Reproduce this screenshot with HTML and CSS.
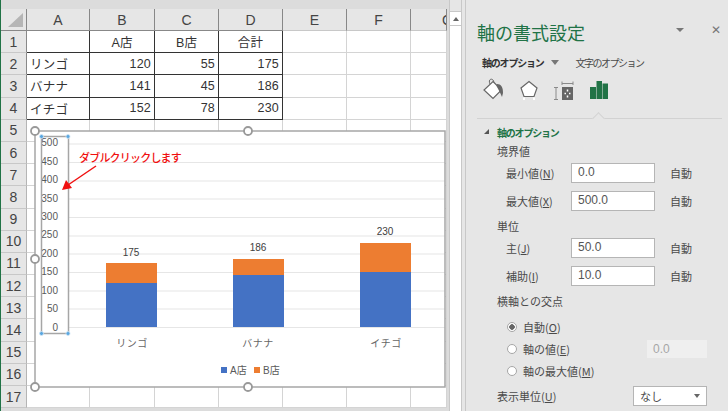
FILE: index.html
```html
<!doctype html>
<html lang="ja">
<head>
<meta charset="utf-8">
<title>軸の書式設定</title>
<link rel="stylesheet" href="styles.css">
</head>
<body>
<div class="app">
  <!-- シート -->
  <div class="sheet">
    <table class="cells">
      <colgroup>
        <col class="c-head"><col class="c-a"><col class="c-b"><col class="c-c"><col class="c-d"><col class="c-e"><col class="c-f"><col class="c-g">
      </colgroup>
      <tr class="heads">
        <th class="corner"><span class="corner-mark"></span></th><th>A</th><th>B</th><th>C</th><th>D</th><th>E</th><th>F</th><th class="clip">G</th>
      </tr>
      <tr><th>1</th><td class="box"></td><td class="box mid">A店</td><td class="box mid">B店</td><td class="box mid">合計</td><td></td><td></td><td></td></tr>
      <tr><th>2</th><td class="box">リンゴ</td><td class="box num">120</td><td class="box num">55</td><td class="box num">175</td><td></td><td></td><td></td></tr>
      <tr><th>3</th><td class="box">バナナ</td><td class="box num">141</td><td class="box num">45</td><td class="box num">186</td><td></td><td></td><td></td></tr>
      <tr><th>4</th><td class="box">イチゴ</td><td class="box num">152</td><td class="box num">78</td><td class="box num">230</td><td></td><td></td><td></td></tr>
      <tr><th>5</th><td></td><td></td><td></td><td></td><td></td><td></td><td></td></tr>
      <tr><th>6</th><td></td><td></td><td></td><td></td><td></td><td></td><td></td></tr>
      <tr><th>7</th><td></td><td></td><td></td><td></td><td></td><td></td><td></td></tr>
      <tr><th>8</th><td></td><td></td><td></td><td></td><td></td><td></td><td></td></tr>
      <tr><th>9</th><td></td><td></td><td></td><td></td><td></td><td></td><td></td></tr>
      <tr><th>10</th><td></td><td></td><td></td><td></td><td></td><td></td><td></td></tr>
      <tr><th>11</th><td></td><td></td><td></td><td></td><td></td><td></td><td></td></tr>
      <tr><th>12</th><td></td><td></td><td></td><td></td><td></td><td></td><td></td></tr>
      <tr><th>13</th><td></td><td></td><td></td><td></td><td></td><td></td><td></td></tr>
      <tr><th>14</th><td></td><td></td><td></td><td></td><td></td><td></td><td></td></tr>
      <tr><th>15</th><td></td><td></td><td></td><td></td><td></td><td></td><td></td></tr>
      <tr><th>16</th><td></td><td></td><td></td><td></td><td></td><td></td><td></td></tr>
      <tr><th>17</th><td></td><td></td><td></td><td></td><td></td><td></td><td></td></tr>
    </table>

    <!-- グラフ -->
    <svg class="chart" viewBox="28 125 420 268" width="420" height="268">
      <rect class="chart-bg" x="35" y="131" width="410" height="256"/>
      <g class="grid">
        <path d="M69 144H445M69 162.500H445M69 181H445M69 199H445M69 217.500H445M69 236H445M69 254H445M69 272.500H445M69 291H445M69 309H445M69 327.500H445"/>
      </g>
      <g class="blue">
        <rect x="106" y="283" width="51" height="44"/>
        <rect x="233" y="275" width="51" height="52"/>
        <rect x="360" y="272" width="51" height="55"/>
      </g>
      <g class="orange">
        <rect x="106" y="263" width="51" height="20"/>
        <rect x="233" y="259" width="51" height="16"/>
        <rect x="360" y="243" width="51" height="29"/>
      </g>
      <g class="val">
        <text x="131" y="256">175</text>
        <text x="258" y="251">186</text>
        <text x="385" y="235">230</text>
      </g>
      <g class="axis">
        <text x="58" y="146">500</text>
        <text x="58" y="165">450</text>
        <text x="58" y="183">400</text>
        <text x="58" y="202">350</text>
        <text x="58" y="220">300</text>
        <text x="58" y="238">250</text>
        <text x="58" y="257">200</text>
        <text x="58" y="275">150</text>
        <text x="58" y="294">100</text>
        <text x="58" y="312">50</text>
        <text x="58" y="331">0</text>
      </g>
      <g class="cat">
        <text x="132" y="347">リンゴ</text>
        <text x="258" y="347">バナナ</text>
        <text x="386" y="347">イチゴ</text>
      </g>
      <rect class="blue" x="221" y="367" width="6" height="6"/>
      <text class="legend" x="230" y="374">A店</text>
      <rect class="orange" x="254" y="367" width="6" height="6"/>
      <text class="legend" x="263" y="374">B店</text>

      <!-- グラフの枠 -->
      <rect class="frame" x="35" y="131" width="410" height="256"/>
      <g class="handle">
        <circle cx="35" cy="131" r="4"/>
        <circle cx="248" cy="131" r="4"/>
        <circle cx="35" cy="259" r="4"/>
        <circle cx="35" cy="387" r="4"/>
        <circle cx="248" cy="387" r="4"/>
      </g>
      <!-- 縦軸の選択 -->
      <rect class="axis-box" x="41.500" y="136.500" width="27" height="197"/>
      <g class="dot">
        <circle cx="41.500" cy="136.500" r="2"/>
        <circle cx="68" cy="136.500" r="2"/>
        <circle cx="41.500" cy="333.500" r="2"/>
        <circle cx="68" cy="333.500" r="2"/>
      </g>
      <text class="note" x="79" y="162">ダブルクリックします</text>
      <path class="arrow-line" d="M96 166L68 185"/>
      <path class="arrow-head" d="M62 190L66 180L72 188Z"/>
    </svg>
  </div>

  <!-- スクロールバー -->
  <div class="vscroll">
    <div class="vscroll-btn"><span class="up"></span></div>
  </div>

  <!-- 作業ウィンドウ -->
  <aside class="pane">
    <div class="pane-top">
      <h1>軸の書式設定</h1>
      <span class="pane-drop"></span>
      <span class="pane-close">✕</span>
    </div>
    <div class="tabs">
      <span class="tab-on">軸のオプション</span>
      <span class="tab-arrow"></span>
      <span class="tab-off">文字のオプション</span>
    </div>
    <div class="icons">
      <svg width="22" height="22" viewBox="0 0 22 22">
        <path d="M8 6C6 2 9 0 11 2C12 3 12 5 11 7" fill="none" stroke="#666"/>
        <path d="M11 3.500L19.500 12L11 20.500L2 12Z" fill="#fff" stroke="#666" stroke-width="1.200"/>
        <path d="M15 6C19 6 21 9 21 15L20 19L18 14.500L14.500 8Z" fill="#666"/>
      </svg>
      <svg width="20" height="22" viewBox="0 0 20 22">
        <path d="M10 3.500L18 10L15 18.500H5L2 10Z" fill="#fff" stroke="#666" stroke-width="1.200"/>
        <path d="M5 19.500V22M15 19.500V22" stroke="#fff" stroke-width="2"/>
      </svg>
      <svg width="20" height="22" viewBox="1 0 20 22">
        <path d="M9 5.500H20M9 3.500V7M20 3.500V7M1 9.500H5M1 21.500H5M3 9.500V21.500" fill="none" stroke="#8a8a8a"/>
        <rect x="9" y="9" width="11" height="13" fill="#666"/>
        <path d="M14.500 11.500V13.500M14.500 17.500V19.500M11.500 15.500H13M16 15.500H17.500" stroke="#fff" stroke-width="1.500"/>
      </svg>
      <svg width="20" height="22" viewBox="0 0 20 22">
        <path d="M1 9H7V21H1ZM7.500 3H13V21H7.500ZM13.500 5.500H19V21H13.500Z" fill="#217346"/>
      </svg>
    </div>
    <div class="rule"><span class="notch"></span></div>

    <div class="section">
      <span class="sec-mark"></span>軸のオプション
    </div>

    <div class="group first">境界値</div>
    <div class="field">
      <label>最小値(<u>N</u>)</label><span class="input">0.0</span><span class="auto">自動</span>
    </div>
    <div class="field">
      <label>最大値(<u>X</u>)</label><span class="input">500.0</span><span class="auto">自動</span>
    </div>

    <div class="group">単位</div>
    <div class="field">
      <label>主(<u>J</u>)</label><span class="input">50.0</span><span class="auto">自動</span>
    </div>
    <div class="field">
      <label>補助(<u>I</u>)</label><span class="input">10.0</span><span class="auto">自動</span>
    </div>

    <div class="group">横軸との交点</div>
    <div class="radios">
      <div class="radio"><span class="dot-r on"></span>自動(<u>O</u>)</div>
      <div class="radio"><span class="dot-r"></span>軸の値(<u>E</u>)<span class="input off">0.0</span></div>
      <div class="radio"><span class="dot-r"></span>軸の最大値(<u>M</u>)</div>
    </div>
    <div class="unit">
      <label>表示単位(<u>U</u>)</label>
      <span class="select">なし<span class="sel-arrow"></span></span>
    </div>
  </aside>
</div>
</body>
</html>
```

FILE: styles.css
```css
html, body {
    margin: 0;
    height: 100%;
    overflow: hidden;
}

body {
    background: #e6e6e6;
    color: #4a4a4a;
    font-family: "Noto Sans CJK JP", "Liberation Sans", sans-serif;
}

.app {
    display: flex;
    width: 728px;
    height: 411px;
    overflow: hidden;
}

/* シート */
.sheet {
    position: relative;
    flex: none;
    width: 449px;
    height: 411px;
    padding-top: 9px;
    box-sizing: border-box;
    border-left: 1px solid #217346;
    background: #dcdcdc;
    overflow: hidden;
}

.cells {
    border-collapse: separate;
    border-spacing: 0;
    table-layout: fixed;
    width: 446px;
    background: #fff;
}

.c-head { width: 26px; }
.c-a { width: 63px; }
.c-b { width: 65px; }
.c-c { width: 64px; }
.c-d { width: 64px; }
.c-e { width: 64px; }
.c-f { width: 64px; }
.c-g { width: 36px; }

.cells tr {
    height: 22.2px;
}

.cells .heads {
    height: 22px;
}

.cells th {
    padding: 0;
    box-sizing: border-box;
    background: #e6e6e6;
    color: #444;
    border-right: 1px solid #b5b5b5;
    border-bottom: 1px solid #c8c8c8;
    font: 14px "Liberation Sans", sans-serif;
    overflow: hidden;
}

.cells tr:nth-child(-n+5) th {
    border-right-color: #888;
}

.cells .heads th:nth-child(-n+5) {
    border-bottom-color: #888;
}

.cells td {
    padding: 0 3px;
    box-sizing: border-box;
    border-right: 1px solid #d4d4d4;
    border-bottom: 1px solid #d4d4d4;
    color: #333;
    font: 12.500px "Liberation Sans", "Noto Sans CJK JP", sans-serif;
    letter-spacing: 0.2px;
    white-space: nowrap;
}

.cells td.box {
    border-right: 1.500px solid #333;
    border-bottom: 1.500px solid #333;
}

.mid { text-align: center; }
.num { text-align: right; }

.clip {
    text-align: left;
    padding-left: 31px !important;
}

.corner {
    position: relative;
}

.corner-mark {
    position: absolute;
    left: 7px;
    top: 4px;
    width: 0;
    height: 0;
    border-left: 15px solid transparent;
    border-bottom: 14px solid #b5b5b5;
}

/* グラフ */
.chart {
    position: absolute;
    left: 27px;
    top: 125px;
}

.chart-bg { fill: #fff; }
.grid path { stroke: #e6e6e6; stroke-width: 1.200; fill: none; }
.blue { fill: #4472c4; }
.orange { fill: #ed7d31; }

.chart text {
    font-family: "Liberation Sans", "Noto Sans CJK JP", sans-serif;
}

.val text {
    font-size: 10px;
    fill: #404040;
    text-anchor: middle;
}

.axis text {
    font-size: 10px;
    fill: #595959;
    text-anchor: end;
}

.cat text {
    font-size: 10px;
    fill: #666;
    text-anchor: middle;
    letter-spacing: 0.5px;
}

.legend {
    font-size: 10px;
    fill: #595959;
}

.frame {
    fill: none;
    stroke: #a6a6a6;
    stroke-width: 1.500;
}

.handle circle {
    fill: #fff;
    stroke: #999;
    stroke-width: 1.800;
}

.axis-box {
    fill: none;
    stroke: #a6a6a6;
    stroke-width: 1.500;
}

.dot circle {
    fill: #5aa7e0;
    stroke: #cfe4f5;
    stroke-width: 0.800;
}

.chart .note {
    font-size: 11px;
    font-weight: 500;
    fill: #f01010;
    font-family: "Noto Sans CJK JP", sans-serif;
    letter-spacing: -0.8px;
}

.arrow-line {
    stroke: #f01010;
    stroke-width: 1.500;
    fill: none;
}

.arrow-head { fill: #f01010; }

/* スクロールバー */
.vscroll {
    flex: none;
    width: 13px;
    height: 411px;
    padding-top: 11px;
    box-sizing: border-box;
    border-left: 1px solid #c8c8c8;
    border-right: 1px solid #c8c8c8;
    background: linear-gradient(#e6e6e6 11px, #fff 11px);
}

.vscroll-btn {
    display: flex;
    justify-content: center;
    align-items: center;
    height: 13px;
    border-top: 1px solid #c8c8c8;
    border-bottom: 1px solid #c8c8c8;
}

.up {
    width: 0;
    height: 0;
    border: 3px solid transparent;
    border-top: 0;
    border-bottom: 4px solid #666;
}

/* 作業ウィンドウ */
.pane {
    flex: none;
    width: 260px;
    height: 411px;
    margin-left: 3px;
    padding: 0 3px 0 11px;
    box-sizing: border-box;
    border-left: 1px solid #c8c8c8;
    font-size: 11px;
    color: #4a4a4a;
}

.pane-top {
    display: flex;
    align-items: center;
    height: 48px;
    padding-top: 9px;
    box-sizing: border-box;
}

.pane-top h1 {
    flex: 1;
    margin: 6px 0 0;
    font-size: 18px;
    font-weight: 400;
    line-height: 48px;
    color: #217346;
}

.pane-drop {
    width: 0;
    height: 0;
    margin-top: 2px;
    margin-right: 27px;
    border: 4px solid transparent;
    border-bottom: 0;
    border-top: 4px solid #777;
}

.pane-close {
    margin-top: 2px;
    margin-right: 1px;
    font-family: "DejaVu Sans", sans-serif;
    font-size: 12px;
    font-weight: 700;
    color: #777;
}

.tabs {
    display: flex;
    align-items: center;
    height: 22px;
    margin-top: 3px;
    padding-left: 5px;
    font-size: 10px;
    letter-spacing: -1.200px;
}

.tab-on {
    font-weight: 700;
    color: #333;
}

.tab-off {
    letter-spacing: -1.500px;
}

.tab-arrow {
    width: 0;
    height: 0;
    margin: 0 17px 0 7px;
    border: 4px solid transparent;
    border-bottom: 0;
    border-top: 5px solid #777;
}

.icons {
    display: flex;
    gap: 15px;
    align-items: center;
    height: 30px;
    margin-top: 1px;
    padding-left: 5px;
}

.rule {
    position: relative;
    height: 0;
    margin-top: 14px;
    border-bottom: 1px solid #d2d2d2;
}

.notch {
    position: absolute;
    left: 117px;
    top: -4px;
    width: 8px;
    height: 8px;
    background: #e6e6e6;
    border-left: 1px solid #d2d2d2;
    border-top: 1px solid #d2d2d2;
    transform: rotate(45deg);
}

.section {
    position: relative;
    display: flex;
    align-items: center;
    height: 18px;
    margin-top: 4px;
    padding-left: 20px;
    font-size: 10px;
    font-weight: 700;
    letter-spacing: -1.200px;
    color: #217346;
}

.sec-mark {
    position: absolute;
    left: 7px;
    top: 6px;
    width: 0;
    height: 0;
    border-left: 5px solid transparent;
    border-bottom: 5px solid #555;
}

.group {
    height: 20px;
    margin-top: 5px;
    padding-left: 20px;
    line-height: 20px;
}

.group.first {
    margin-top: 0;
}

.field {
    display: flex;
    align-items: center;
    height: 20px;
    margin-top: 8px;
    padding-left: 29px;
}

.group + .field {
    margin-top: 2px;
}

.field label {
    width: 65px;
}

.input {
    display: block;
    box-sizing: border-box;
    width: 84px;
    height: 20px;
    padding-left: 6px;
    background: #fff;
    border: 1px solid #b5b5b5;
    font-family: "Liberation Sans", sans-serif;
    font-size: 12px;
    line-height: 16px;
    color: #555;
}

.auto {
    margin-left: 15px;
}

.radios {
    padding-top: 5px;
}

.radio {
    display: flex;
    align-items: center;
    height: 22px;
    padding-left: 30px;
}

.dot-r {
    box-sizing: border-box;
    width: 10px;
    height: 10px;
    margin-right: 6px;
    border: 1px solid #a6a6a6;
    border-radius: 50%;
    background: #fff;
}

.dot-r.on {
    background: radial-gradient(circle, #666 0 2.500px, #fff 3px);
}

.input.off {
    width: 60px;
    height: 18px;
    margin-left: auto;
    margin-right: 15px;
    border: 0;
    background: #efefef;
    color: #a6a6a6;
    line-height: 18px;
}

.unit {
    display: flex;
    align-items: center;
    height: 20px;
    margin-top: 4px;
    padding-left: 20px;
}

.unit label {
    width: 136px;
}

.select {
    display: flex;
    align-items: center;
    box-sizing: border-box;
    width: 74px;
    height: 20px;
    padding: 0 6px;
    background: #fff;
    border: 1px solid #b5b5b5;
}

.sel-arrow {
    width: 0;
    height: 0;
    margin-left: auto;
    border: 3px solid transparent;
    border-bottom: 0;
    border-top: 4px solid #666;
}
```
